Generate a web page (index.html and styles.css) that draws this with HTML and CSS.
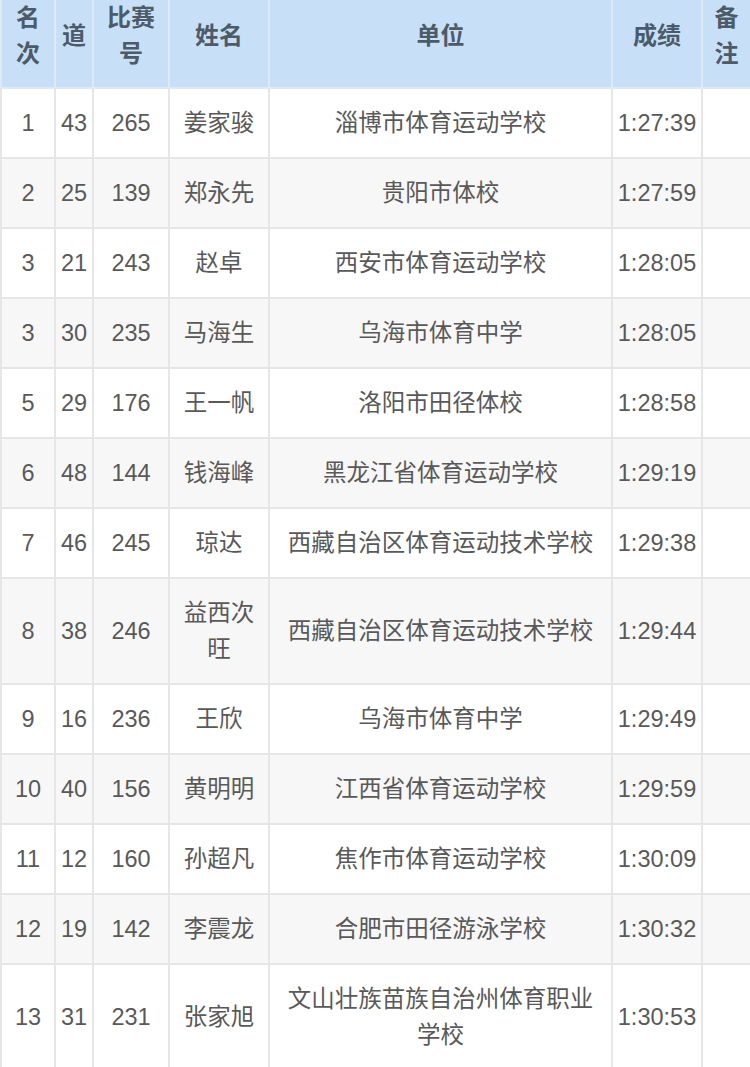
FILE: index.html
```html
<!DOCTYPE html>
<html lang="zh-CN">
<head>
<meta charset="utf-8">
<title>成绩表</title>
<link rel="stylesheet" href="styles.css">
</head>
<body>
<table class="results">
  <colgroup>
    <col class="c-rank">
    <col class="c-lane">
    <col class="c-bib">
    <col class="c-name">
    <col class="c-unit">
    <col class="c-time">
    <col class="c-note">
  </colgroup>
  <thead>
    <tr>
      <th>名次</th>
      <th>道</th>
      <th>比赛号</th>
      <th>姓名</th>
      <th class="unit">单位</th>
      <th>成绩</th>
      <th>备注</th>
    </tr>
  </thead>
  <tbody>
    <tr><td>1</td><td>43</td><td>265</td><td>姜家骏</td><td class="unit">淄博市体育运动学校</td><td>1:27:39</td><td></td></tr>
    <tr><td>2</td><td>25</td><td>139</td><td>郑永先</td><td class="unit">贵阳市体校</td><td>1:27:59</td><td></td></tr>
    <tr><td>3</td><td>21</td><td>243</td><td>赵卓</td><td class="unit">西安市体育运动学校</td><td>1:28:05</td><td></td></tr>
    <tr><td>3</td><td>30</td><td>235</td><td>马海生</td><td class="unit">乌海市体育中学</td><td>1:28:05</td><td></td></tr>
    <tr><td>5</td><td>29</td><td>176</td><td>王一帆</td><td class="unit">洛阳市田径体校</td><td>1:28:58</td><td></td></tr>
    <tr><td>6</td><td>48</td><td>144</td><td>钱海峰</td><td class="unit">黑龙江省体育运动学校</td><td>1:29:19</td><td></td></tr>
    <tr><td>7</td><td>46</td><td>245</td><td>琼达</td><td class="unit">西藏自治区体育运动技术学校</td><td>1:29:38</td><td></td></tr>
    <tr><td>8</td><td>38</td><td>246</td><td>益西次旺</td><td class="unit">西藏自治区体育运动技术学校</td><td>1:29:44</td><td></td></tr>
    <tr><td>9</td><td>16</td><td>236</td><td>王欣</td><td class="unit">乌海市体育中学</td><td>1:29:49</td><td></td></tr>
    <tr><td>10</td><td>40</td><td>156</td><td>黄明明</td><td class="unit">江西省体育运动学校</td><td>1:29:59</td><td></td></tr>
    <tr><td>11</td><td>12</td><td>160</td><td>孙超凡</td><td class="unit">焦作市体育运动学校</td><td>1:30:09</td><td></td></tr>
    <tr><td>12</td><td>19</td><td>142</td><td>李震龙</td><td class="unit">合肥市田径游泳学校</td><td>1:30:32</td><td></td></tr>
    <tr><td>13</td><td>31</td><td>231</td><td>张家旭</td><td class="unit">文山壮族苗族自治州体育职业学校</td><td>1:30:53</td><td></td></tr>
  </tbody>
</table>
</body>
</html>
```

FILE: styles.css
```css
html, body {
  margin: 0;
  padding: 0;
  background: #ffffff;
}

body {
  font-family: "Liberation Sans", "Noto Sans CJK SC", sans-serif;
  font-size: 24px;
  line-height: 36px;
  color: #595959;
}

.results {
  width: 750px;
  table-layout: fixed;
  border-collapse: collapse;
}

.c-rank { width: 54px; }
.c-lane { width: 38px; }
.c-bib  { width: 76px; }
.c-name { width: 100px; }
.c-unit { width: 343px; }
.c-time { width: 90px; }
.c-note { width: 49px; }

.results th,
.results td {
  border: 2px solid #e6e6e6;
  text-align: center;
  vertical-align: middle;
  padding: 16px 4px;
}

.results td {
  font-size: 23.5px;
}

.results td.unit {
  padding-left: 8px;
  padding-right: 8px;
}

.results th {
  background: #c7e0f7;
  color: #4d5a68;
  font-weight: bold;
  padding: 0 4px 15px;
  border-color: #dde9f4;
  border-top: none;
}

.results tbody tr:nth-child(even) td {
  background: #f7f7f8;
}
```
